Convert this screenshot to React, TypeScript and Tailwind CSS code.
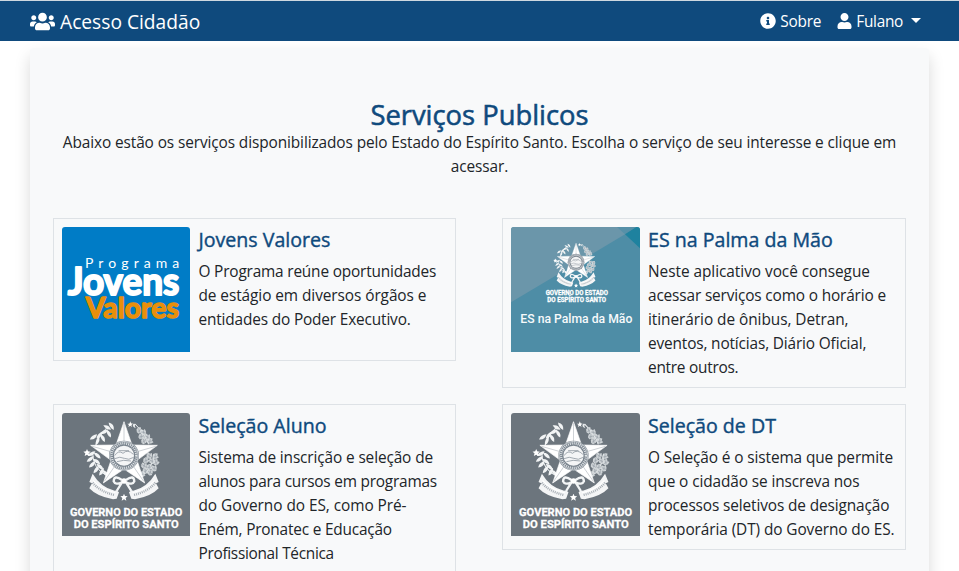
import type { ReactNode } from 'react';
import { FaInfoCircle, FaUser, FaUsers } from 'react-icons/fa';

const STAR = '186,26 210,96 286,97 225,142 248,210 186,168 124,210 147,142 86,97 162,96';

const LEAVES_LEFT = [
  [112, 66, 40], [126, 56, 62], [136, 44, -60], [148, 40, -35], [106, 84, 20],
  [94, 72, 55], [122, 76, -30], [140, 62, -30], [88, 122, 60], [106, 128, -50],
  [84, 138, 50], [104, 146, -55], [90, 154, 45], [114, 162, -50], [102, 170, 35],
  [118, 176, 30], [130, 182, -40],
];

const LEAVES_RIGHT = [
  [232, 52, 20], [244, 58, -40], [238, 70, 40], [256, 72, -20], [246, 84, 20],
  [264, 84, 45], [262, 128, -20], [280, 130, 40], [252, 142, 30], [270, 144, -35],
  [282, 148, 20], [246, 158, -20], [262, 162, 40], [276, 166, -30], [250, 174, 30],
  [264, 178, -20], [240, 184, 40],
];

function Ribbon() {
  return (
    <g strokeLinejoin="round">
      <path d="M92 182 L82 207 L90 211 L82 226 Q104 250 153 259 L164 257 L171 238 Q166 232 158 233 Q116 223 92 182Z" fill="#f4f5f6" />
      <path d="M92 209 Q112 235 157 246" fill="none" stroke="#a4abb2" strokeWidth="7" strokeDasharray="3 3" />
      <path d="M94 202 Q116 229 160 239" fill="none" stroke="#fff" strokeWidth="3" />
    </g>
  );
}

function Crest() {
  return (
    <g>
      <path d="M138 40 Q96 84 102 108 M92 120 Q92 166 134 188 M220 34 Q250 64 260 94 M276 122 Q272 168 238 190" fill="none" stroke="#edf0f2" strokeWidth="3" />
      {LEAVES_LEFT.map(([x, y, r]) => (
        <path key={`${x}-${y}`} d="M0 -14 Q12 0 0 13 Q-8 0 0 -14" transform={`translate(${x} ${y}) rotate(${r})`} fill="#f2f4f5" />
      ))}
      {LEAVES_RIGHT.map(([x, y, r]) => (
        <g key={`${x}-${y}`} transform={`translate(${x} ${y}) rotate(${r})`}>
          <path d="M0 -11 L4 -5 L10 -5 L8 3 L2 10 L-5 8 L-9 0 L-6 -7Z" fill="#dce0e3" opacity=".88" />
          <path d="M-4 -5 L4 6 M4 -4 L-3 5" stroke="#9aa2aa" strokeWidth="2" />
        </g>
      ))}
      <path d="M205 25l2 6 6 1-5 4 2 6-5-4-6 4 2-6-5-4h6zM75 108l3 7 8 1-6 5 2 8-7-4-7 4 2-8-6-5 8-1z" fill="#fff" />
      <path d="M224 33q-10 4-2 13q-13-5-8-14" fill="#e7eaec" />
      <polygon points={STAR} fill="#fff" stroke="#fff" strokeWidth="2" />
      <path d="M186 30V94 M281 100L222 117 M245 205L212 157 M127 205L160 157 M91 100L150 117" stroke="#9ba3ab" strokeWidth="1.5" />
      <circle cx="186" cy="128" r="45" fill="#7b858f" />
      <circle cx="186" cy="128" r="43" fill="none" stroke="#edf0f1" strokeWidth="2" />
      <circle cx="186" cy="128" r="37" fill="none" stroke="#e1e5e8" strokeWidth="7" strokeDasharray="3 3" />
      <circle cx="186" cy="128" r="30" fill="#f4f5f6" />
      <path d="M158 128Q169 110 183 121Q197 107 214 124 M158 137Q174 129 187 136T215 133 M165 146Q184 139 207 144 M170 113h31" fill="none" stroke="#919aa3" strokeWidth="2.5" />
      <Ribbon />
      <g transform="translate(372 0) scale(-1 1)"><Ribbon /></g>
      <path d="M180 201Q156 184 155 205Q160 217 180 208L164 234M192 201Q216 184 217 205Q212 217 192 208L208 234" fill="none" stroke="#f3f5f6" strokeWidth="7" />
      <circle cx="186" cy="204" r="8" fill="#fff" />
      <path d="M186 242l3 7 8 1-6 5 2 8-7-4-7 4 2-8-6-5 8-1z" fill="#fff" />
    </g>
  );
}

function GovernmentLogo({ width }: { width: string }) {
  return (
    <svg viewBox="0 0 384 369" className={`block h-[123px] rounded-t-[3px] bg-[#6c757d] ${width}`} preserveAspectRatio="none">
      <Crest />
      <g fill="#fff" stroke="#fff" strokeWidth=".8" fontFamily="Roboto, 'Liberation Sans', sans-serif" fontWeight="700" fontSize="35.5">
        <text transform="translate(24 308) scale(.93 1)" textLength="362" lengthAdjust="spacingAndGlyphs">GOVERNO DO ESTADO</text>
        <text transform="translate(35 345) scale(.93 1)" textLength="339" lengthAdjust="spacingAndGlyphs">DO ESPÍRITO SANTO</text>
      </g>
    </svg>
  );
}

function PalmaLogo() {
  return (
    <svg viewBox="0 0 387 375" className="block h-[125px] w-[129px] rounded-t-[3px] bg-[#4e8da6]" preserveAspectRatio="none">
      <path d="M0 0H376L342 22L0 226Z" fill="#6b96aa" />
      <path d="M318 0H376L342 22Z" fill="#5690a8" />
      <path d="M376 0H387V64L342 22Z" fill="#1e829f" />
      <g transform="translate(91 34) scale(.56)"><Crest /></g>
      <g fill="#fff" stroke="#fff" strokeWidth=".8" fontFamily="Roboto, 'Liberation Sans', sans-serif" fontWeight="700" fontSize="19.5">
        <text transform="translate(104 205) scale(.93 1)" textLength="201" lengthAdjust="spacingAndGlyphs">GOVERNO DO ESTADO</text>
        <text transform="translate(109 225) scale(.93 1)" textLength="189" lengthAdjust="spacingAndGlyphs">DO ESPÍRITO SANTO</text>
      </g>
      <text x="28" y="289" textLength="336" lengthAdjust="spacingAndGlyphs" fill="#f7fafb" fontFamily="Roboto, sans-serif" fontWeight="500" fontSize="36">ES na Palma da Mão</text>
    </svg>
  );
}

function JovensLogo() {
  return (
    <svg viewBox="0 0 384 375" className="block h-[125px] w-32 rounded-t-[3px] bg-[#007cc6]" preserveAspectRatio="none">
      <text x="69" y="124" textLength="283" fill="#fff" fontFamily="Lato, sans-serif" fontSize="42">Programa</text>
      <g fontFamily="Lato, sans-serif" fontWeight="700" strokeLinejoin="round" strokeLinecap="round">
        <text x="71" y="274" textLength="280" lengthAdjust="spacingAndGlyphs" fontSize="84" fill="#e98f0b" stroke="#e98f0b" strokeWidth="4.5">Valores</text>
        <text x="17" y="203" textLength="335" lengthAdjust="spacingAndGlyphs" fontSize="115" fill="#fff" stroke="#fff" strokeWidth="6">Jovens</text>
      </g>
    </svg>
  );
}

type ServiceProps = { logo: ReactNode; title: string; textInset: string; lines: [string, string][] };

function Service({ logo, title, textInset, lines }: ServiceProps) {
  return (
    <article className="flex items-start border border-[#dee2e6] p-2">
      <div className="shrink-0">{logo}</div>
      <div className={`-mb-px mt-px min-w-0 flex-1 ${textInset}`}>
        <h2 className="mb-2 whitespace-nowrap text-[19.6px] leading-6 text-[#0f4a7d] [-webkit-text-stroke:0.4px_#0f4a7d]">{title}</h2>
        <p className="text-[15.4px] leading-6">
          {lines.map(([text, tracking]) => (
            <span key={text} className={`block whitespace-nowrap ${tracking}`}>{text}</span>
          ))}
        </p>
      </div>
    </article>
  );
}

export default function App() {
  return (
    <div className="h-[571px] overflow-hidden bg-white font-['Open_Sans','Noto_Sans',sans-serif] text-[#212529]">
      <nav className="flex h-[41px] items-center justify-between border-t border-[#ced8e0] bg-[#0f4a7d] pl-[30px] pr-[38px] text-white">
        <a className="flex items-center gap-[5px] text-[19.2px]">
          <FaUsers className="mt-px h-[25px] w-[25px]" />
          <span className="pt-[2px]">Acesso Cidadão</span>
        </a>
        <div className="flex items-center text-[15.4px]">
          <FaInfoCircle className="mr-1 h-4 w-4" />
          <span className="pt-[2px] tracking-[-0.2px]">Sobre</span>
          <FaUser className="ml-4 mr-1 h-4 w-[15px]" />
          <span className="pt-[2px] tracking-[-0.3px]">Fulano</span>
          <span className="ml-2 border-x-[5px] border-t-[5px] border-x-transparent border-t-white" />
        </div>
      </nav>
      <main className="mx-[30px] mt-[7px] h-[700px] rounded-[4px] bg-[#f8f9fa] px-[23px] pt-[50px] shadow-[0_8px_16px_rgba(0,0,0,0.15)]">
        <header className="text-center">
          <h1 className="text-[27.35px] leading-[33px] text-[#0f4a7d] [-webkit-text-stroke:0.55px_#0f4a7d]">Serviços Publicos</h1>
          <p className="text-[15.4px] leading-6 tracking-[-0.1px]">
            <span className="block whitespace-nowrap">Abaixo estão os serviços disponibilizados pelo Estado do Espírito Santo. Escolha o serviço de seu interesse e clique em</span>
            <span className="block">acessar.</span>
          </p>
        </header>
        <div className="mt-[39px] grid grid-cols-[403px_404px] items-start gap-x-[46px] gap-y-4">
          <Service logo={<JovensLogo />} title="Jovens Valores" textInset="pl-[8.5px]" lines={[
            ['O Programa reúne oportunidades', 'tracking-[-0.18px]'],
            ['de estágio em diversos órgãos e', 'tracking-[-0.07px]'],
            ['entidades do Poder Executivo.', 'tracking-[-0.16px]'],
          ]} />
          <Service logo={<PalmaLogo />} title="ES na Palma da Mão" textInset="pl-2" lines={[
            ['Neste aplicativo você consegue', 'tracking-[-0.04px]'],
            ['acessar serviços como o horário e', 'tracking-[-0.15px]'],
            ['itinerário de ônibus, Detran,', 'tracking-[-0.05px]'],
            ['eventos, notícias, Diário Oficial,', 'tracking-[-0.15px]'],
            ['entre outros.', 'tracking-[-0.25px]'],
          ]} />
          <Service logo={<GovernmentLogo width="w-32" />} title="Seleção Aluno" textInset="pl-[8.5px]" lines={[
            ['Sistema de inscrição e seleção de', 'tracking-[-0.12px]'],
            ['alunos para cursos em programas', 'tracking-[-0.21px]'],
            ['do Governo do ES, como Pré-', 'tracking-[-0.05px]'],
            ['Eném, Pronatec e Educação', 'tracking-[-0.2px]'],
            ['Profissional Técnica', 'tracking-[-0.3px]'],
          ]} />
          <Service logo={<GovernmentLogo width="w-[129px]" />} title="Seleção de DT" textInset="pl-2" lines={[
            ['O Seleção é o sistema que permite', 'tracking-[-0.1px]'],
            ['que o cidadão se inscreva nos', 'tracking-[-0.1px]'],
            ['processos seletivos de designação', 'tracking-[-0.12px]'],
            ['temporária (DT) do Governo do ES.', 'tracking-[-0.09px]'],
          ]} />
        </div>
      </main>
    </div>
  );
}
